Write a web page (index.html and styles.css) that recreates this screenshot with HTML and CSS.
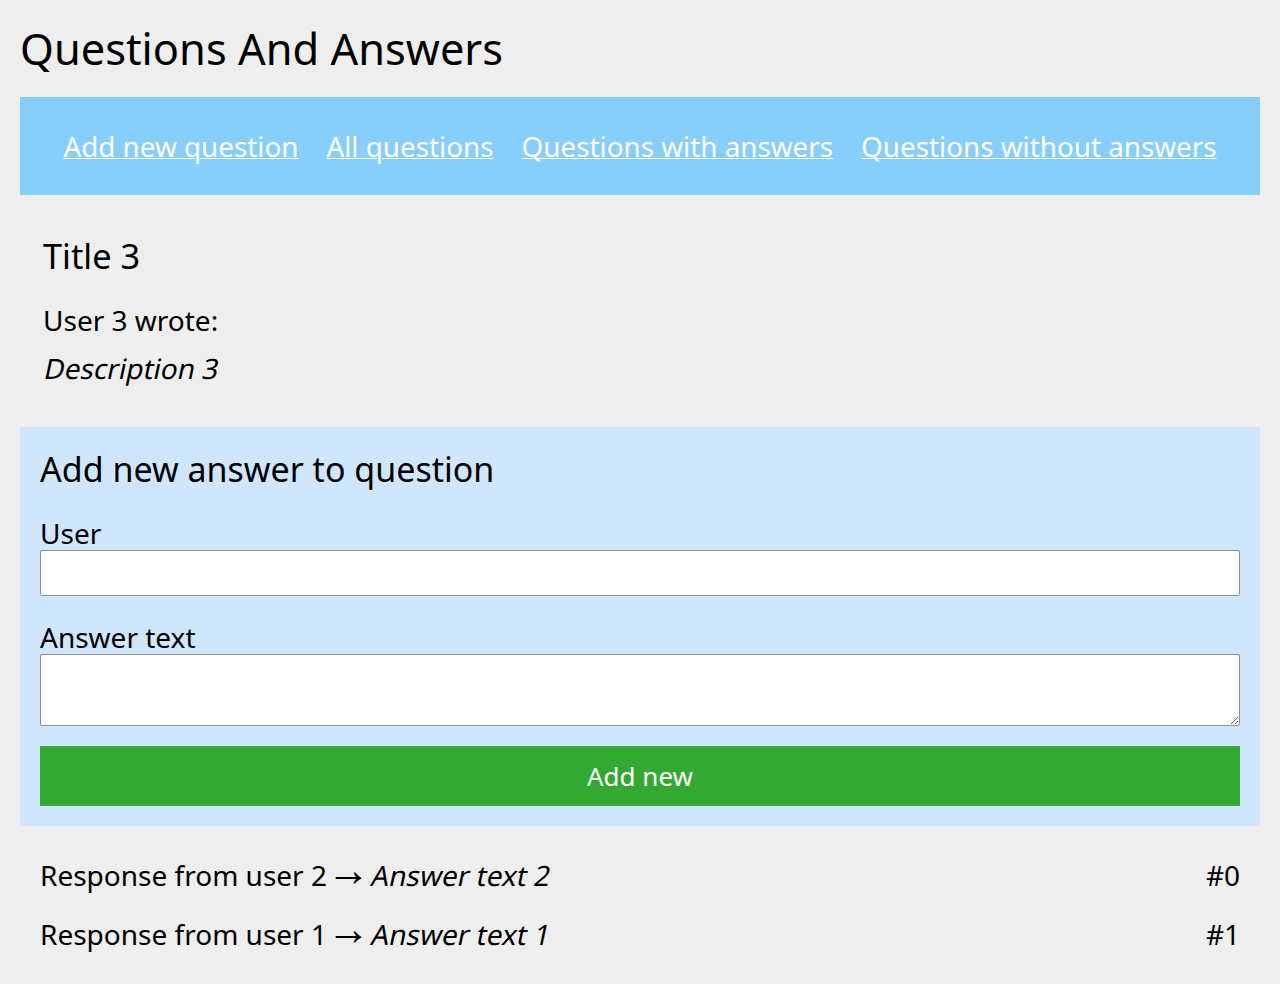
FILE: index.html
```html
<!DOCTYPE html>
<html lang="en">
<head>
<meta charset="utf-8">
<title>Questions And Answers</title>
<link rel="stylesheet" href="styles.css">
</head>
<body>
<div class="page">
  <h1 class="page-title">Questions And Answers</h1>
  <nav class="nav">
    <a href="#">Add new question</a>
    <a href="#">All questions</a>
    <a href="#">Questions with answers</a>
    <a href="#">Questions without answers</a>
  </nav>
  <section class="question">
    <h2 class="question-title">Title 3</h2>
    <p class="question-author">User 3 wrote:</p>
    <p class="question-desc"><span class="slant">Description 3</span></p>
  </section>
  <form class="answer-form">
    <h2 class="form-title">Add new answer to question</h2>
    <label class="field-label" for="user">User</label>
    <input class="field-input" id="user" type="text">
    <label class="field-label" for="text">Answer text</label>
    <textarea class="field-textarea" id="text"></textarea>
    <button class="submit" type="button">Add new</button>
  </form>
  <ul class="answers">
    <li class="answer"><span>Response from user 2 <span class="arrow">→</span> <span class="slant">Answer text 2</span></span><span>#0</span></li>
    <li class="answer"><span>Response from user 1 <span class="arrow">→</span> <span class="slant">Answer text 1</span></span><span>#1</span></li>
  </ul>
</div>
</body>
</html>
```

FILE: styles.css
```css
* { box-sizing: border-box; }
html, body { margin: 0; padding: 0; }
body {
  background: #eeeeee;
  font-family: "Noto Sans", "Open Sans", sans-serif;
  color: #000;
}
.page {
  padding: 20px;
  display: flex;
  flex-direction: column;
}
.page-title {
  margin: 0;
  font-size: 43.4px;
  font-weight: 400;
  line-height: 57px;
  height: 77px;
}
.nav {
  background: #87cefa;
  height: 98px;
  display: flex;
  justify-content: center;
  align-items: center;
  gap: 28px;
}
.nav a {
  color: #fff;
  font-size: 27.8px;
  text-decoration: underline;
  text-decoration-thickness: 1px;
}
.slant {
  display: inline-block;
  transform: skewX(-12deg);
  transform-origin: 0 75%;
}
.question {
  padding: 41px 23px 20px;
}
.question-title {
  margin: 0 0 24px;
  font-size: 34.3px;
  font-weight: 400;
  line-height: 40px;
}
.question-author {
  margin: 0 0 8px;
  font-size: 28px;
  line-height: 40px;
}
.question-desc {
  margin: 0;
  font-size: 28px;
  line-height: 40px;
}
.answer-form {
  background: #cfe6fd;
  padding: 18px 20px 20px;
  display: flex;
  flex-direction: column;
  margin-top: 19px;
}
.form-title {
  margin: 0 0 23px;
  font-size: 34px;
  font-weight: 400;
  line-height: 48px;
}
.field-label {
  font-size: 28px;
  line-height: 34px;
}
.field-input {
  height: 46px;
  border: 1px solid #8f8f9d;
  border-radius: 2px;
  background: #fff;
  margin-bottom: 24px;
  font: inherit;
}
.field-textarea {
  height: 72px;
  border: 1px solid #8f8f9d;
  border-radius: 2px;
  background: #fff;
  margin-bottom: 20px;
  font: inherit;
}
.submit {
  height: 60px;
  background: #33a833;
  color: #fff;
  border: none;
  font-family: inherit;
  font-size: 26px;
}
.answers {
  list-style: none;
  margin: 0;
  padding: 29px 20px 0;
  display: flex;
  flex-direction: column;
  gap: 17px;
}
.answer {
  display: flex;
  justify-content: space-between;
  font-size: 28px;
  line-height: 40px;
}
.arrow {
  font-family: "Noto Sans Math", "Noto Sans Symbols", "DejaVu Sans", sans-serif;
  font-weight: 200;
}
```
